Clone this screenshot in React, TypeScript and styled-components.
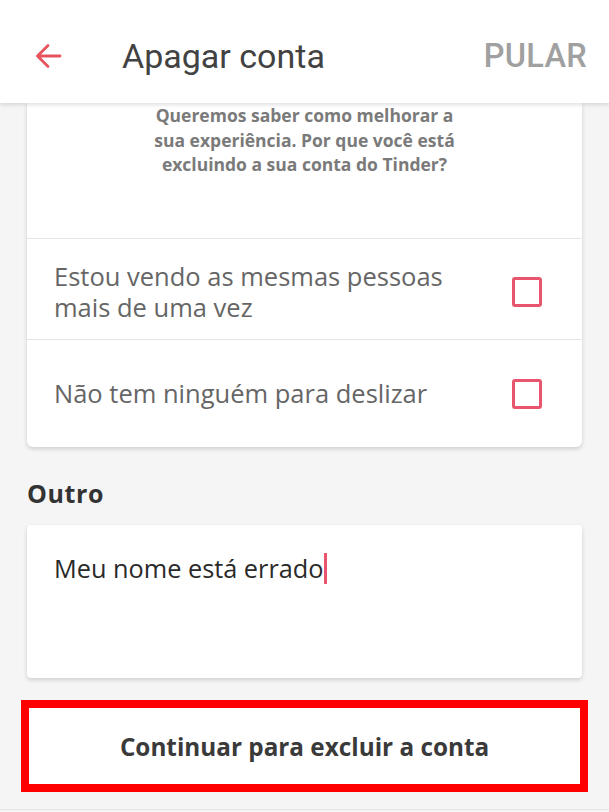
import styled, { createGlobalStyle } from 'styled-components';

const GlobalStyle = createGlobalStyle`
  html, body {
    margin: 0;
    padding: 0;
    background: #f5f5f5;
  }
  * {
    box-sizing: border-box;
  }
`;

const reasons = [
  { text: 'Estou vendo as mesmas pessoas mais de uma vez', height: 101, top: 6 },
  { text: 'Não tem ninguém para deslizar', height: 108, top: 0 },
];

const Page = styled.div`
  width: 609px;
  height: 812px;
  overflow: hidden;
  background: #f5f5f5;
  font-family: "Open Sans", Lato, sans-serif;
  display: flex;
  flex-direction: column;
`;

const Header = styled.header`
  position: relative;
  z-index: 2;
  height: 103px;
  flex-shrink: 0;
  background: #fff;
  box-shadow: 0 2px 4px rgba(0, 0, 0, 0.12);
  display: flex;
  align-items: center;
  padding: 8px 22px 0 33px;
  font-family: Roboto, sans-serif;
`;

const BackButton = styled.button`
  border: 0;
  background: none;
  padding: 0;
  width: 30px;
  height: 30px;
  display: flex;
  align-items: center;
  justify-content: center;
  cursor: pointer;
`;

const Title = styled.h1`
  margin: 0 0 0 59px;
  flex: 1;
  font-size: 34px;
  font-weight: 400;
  color: #424242;
`;

const Skip = styled.span`
  font-size: 32.5px;
  font-weight: 500;
  color: #a0a0a0;
  letter-spacing: 0.3px;
`;

const Content = styled.main`
  padding: 0 27px;
  display: flex;
  flex-direction: column;
`;

const Card = styled.section`
  background: #fff;
  border-radius: 0 0 6px 6px;
  box-shadow: 0 2px 4px rgba(0, 0, 0, 0.16);
`;

const Question = styled.p`
  margin: 0;
  height: 135px;
  padding: 0 114px;
  text-align: center;
  font-size: 17.5px;
  line-height: 24.5px;
  font-weight: 700;
  color: #7a7a7a;
`;

const Row = styled.label<{ $height: number; $top: number }>`
  display: flex;
  align-items: center;
  justify-content: space-between;
  height: ${p => p.$height}px;
  padding: ${p => p.$top}px 40px 0 27px;
  border-top: 1px solid #e6e6e6;
`;

const RowText = styled.span`
  width: 430px;
  font-size: 25.5px;
  line-height: 31px;
  color: #666;
`;

const Checkbox = styled.span`
  width: 30px;
  height: 30px;
  border: 3px solid #e8556d;
  border-radius: 3px;
  flex-shrink: 0;
`;

const SectionTitle = styled.h2`
  margin: 30px 0 16px;
  font-size: 25px;
  line-height: 32px;
  font-weight: 700;
  letter-spacing: 0.6px;
  color: #333;
`;

const InputCard = styled.div`
  background: #fff;
  border-radius: 4px;
  box-shadow: 0 2px 4px rgba(0, 0, 0, 0.16);
  height: 153px;
  padding: 28px 27px;
  font-size: 25.3px;
  line-height: 30px;
  color: #2a2a2a;
`;

const Caret = styled.span`
  display: inline-block;
  width: 3px;
  height: 31px;
  vertical-align: -6px;
  background: #e8556d;
`;

const Highlight = styled.div`
  margin: 22px -6px 0;
  border: 8px solid #ff0000;
`;

const ContinueButton = styled.button`
  width: 100%;
  height: 76px;
  border: 0;
  background: #fff;
  font-family: "Open Sans", Lato, sans-serif;
  font-size: 24.3px;
  font-weight: 700;
  color: #3a3a3a;
  cursor: pointer;
`;

const BottomLine = styled.div`
  margin-top: 17px;
  border-top: 1px solid #e6e6e6;
`;

export default function App() {
  return (
    <Page>
      <GlobalStyle />
      <Header>
        <BackButton aria-label="Voltar">
          <svg width="30" height="30" viewBox="0 0 30 30" fill="none">
            <path d="M27 15H5M15 4.5L4.5 15L15 25.5" stroke="#e8525d" strokeWidth="2.8" strokeLinecap="round" strokeLinejoin="round" />
          </svg>
        </BackButton>
        <Title>Apagar conta</Title>
        <Skip>PULAR</Skip>
      </Header>
      <Content>
        <Card>
          <Question>
            Queremos saber como melhorar a sua experiência. Por que você está excluindo a sua conta do Tinder?
          </Question>
          {reasons.map(r => (
            <Row key={r.text} $height={r.height} $top={r.top}>
              <RowText>{r.text}</RowText>
              <Checkbox />
            </Row>
          ))}
        </Card>
        <SectionTitle>Outro</SectionTitle>
        <InputCard>
          Meu nome está errado<Caret />
        </InputCard>
        <Highlight>
          <ContinueButton>Continuar para excluir a conta</ContinueButton>
        </Highlight>
      </Content>
      <BottomLine />
    </Page>
  );
}
